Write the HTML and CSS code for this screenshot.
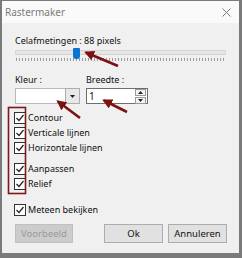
FILE: index.html
```html
<html>
  <head>
    <title>Rastermaker</title>
    <link rel="stylesheet" href="styles.css">
  </head>
  <body>
    <div class="dialog">
      <div class="titlebar">
        <span class="title">Rastermaker</span>
        <svg class="close" width="9" height="9" viewBox="0 0 9 9">
          <path d="M0.5 0.5 L8.5 8.5 M8.5 0.5 L0.5 8.5" stroke="#7a7a7a" stroke-width="1" fill="none"/>
        </svg>
      </div>
      <div class="content">
        <div class="label">Celafmetingen : 88 pixels</div>
        <div class="slider">
          <div class="track"></div>
          <div class="thumb"></div>
          <div class="ticks"></div>
        </div>

        <div class="fields">
          <div class="field">
            <div class="label">Kleur :</div>
            <div class="combo">
              <div class="combo-box"></div>
              <div class="combo-btn">
                <svg width="5" height="3" viewBox="0 0 5 3"><path d="M0 0 L5 0 L2.5 3 Z" fill="#222"/></svg>
              </div>
            </div>
          </div>
          <div class="field">
            <div class="label">Breedte :</div>
            <div class="spin">
              <span class="spin-val">1</span>
              <div class="spin-btns">
                <div class="spin-btn">
                  <svg width="5" height="3" viewBox="0 0 5 3"><path d="M0 3 L5 3 L2.5 0 Z" fill="#222"/></svg>
                </div>
                <div class="spin-btn">
                  <svg width="5" height="3" viewBox="0 0 5 3"><path d="M0 0 L5 0 L2.5 3 Z" fill="#222"/></svg>
                </div>
              </div>
            </div>
          </div>
        </div>

        <div class="checks">
          <div class="check">
            <svg class="cb" width="12" height="12" viewBox="0 0 12 12"><rect x="0.5" y="0.5" width="11" height="11" fill="#fff" stroke="#333"/><path d="M2.5 6 L5 8.5 L9.5 3" fill="none" stroke="#222" stroke-width="1.2"/></svg>
            <span>Contour</span>
          </div>
          <div class="check">
            <svg class="cb" width="12" height="12" viewBox="0 0 12 12"><rect x="0.5" y="0.5" width="11" height="11" fill="#fff" stroke="#333"/><path d="M2.5 6 L5 8.5 L9.5 3" fill="none" stroke="#222" stroke-width="1.2"/></svg>
            <span>Verticale lijnen</span>
          </div>
          <div class="check">
            <svg class="cb" width="12" height="12" viewBox="0 0 12 12"><rect x="0.5" y="0.5" width="11" height="11" fill="#fff" stroke="#333"/><path d="M2.5 6 L5 8.5 L9.5 3" fill="none" stroke="#222" stroke-width="1.2"/></svg>
            <span>Horizontale lijnen</span>
          </div>
          <div class="check spaced">
            <svg class="cb" width="12" height="12" viewBox="0 0 12 12"><rect x="0.5" y="0.5" width="11" height="11" fill="#fff" stroke="#333"/><path d="M2.5 6 L5 8.5 L9.5 3" fill="none" stroke="#222" stroke-width="1.2"/></svg>
            <span>Aanpassen</span>
          </div>
          <div class="check">
            <svg class="cb" width="12" height="12" viewBox="0 0 12 12"><rect x="0.5" y="0.5" width="11" height="11" fill="#fff" stroke="#333"/><path d="M2.5 6 L5 8.5 L9.5 3" fill="none" stroke="#222" stroke-width="1.2"/></svg>
            <span>Relief</span>
          </div>
        </div>

        <div class="check preview">
          <svg class="cb" width="12" height="12" viewBox="0 0 12 12"><rect x="0.5" y="0.5" width="11" height="11" fill="#fff" stroke="#333"/><path d="M2.5 6 L5 8.5 L9.5 3" fill="none" stroke="#222" stroke-width="1.2"/></svg>
          <span>Meteen bekijken</span>
        </div>

        <div class="buttons">
          <div class="btn disabled">Voorbeeld</div>
          <div class="btn ok">Ok</div>
          <div class="btn">Annuleren</div>
        </div>
      </div>

      <!-- annotations drawn over the dialog -->
      <svg class="annot" width="242" height="258" viewBox="0 0 242 258">
        <defs>
          <marker id="head" viewBox="0 0 10 10" refX="8" refY="5" markerWidth="10" markerHeight="10" markerUnits="userSpaceOnUse" orient="auto">
            <path d="M0 0 L10 5 L0 10 Z" fill="#7b1111"/>
          </marker>
        </defs>
        <rect x="8.5" y="107.5" width="17" height="86" fill="none" stroke="#7b1a1a" stroke-width="1.6"/>
        <line x1="118" y1="66" x2="86" y2="52.5" stroke="#7b1111" stroke-width="2.6" marker-end="url(#head)"/>
        <line x1="80" y1="118" x2="58" y2="101.5" stroke="#7b1111" stroke-width="2.6" marker-end="url(#head)"/>
        <line x1="127" y1="112" x2="104" y2="100.5" stroke="#7b1111" stroke-width="2.6" marker-end="url(#head)"/>
      </svg>
    </div>
  </body>
</html>
```

FILE: styles.css
```css
body {
  margin: 0;
  width: 242px;
  height: 258px;
  background: #7a7a7a;
  font-family: "Noto Sans", "Liberation Sans", sans-serif;
  font-size: 9px;
  color: #111;
  overflow: hidden;
}

.dialog {
  position: relative;
  margin: 1px 3px 0 2px;
  height: 252px;
  background: #f0f0f0;
}

.titlebar {
  height: 22px;
  background: #fafafa;
  display: flex;
  align-items: center;
  justify-content: space-between;
  padding: 0 8px 0 3px;
}

.title {
  color: #7c7c7c;
  font-size: 10px;
}

.content {
  display: flex;
  flex-direction: column;
  padding: 12px 12px 0 13px;
}

.label {
  height: 12px;
  line-height: 12px;
}

.slider {
  position: relative;
  box-sizing: border-box;
  width: 211px;
  height: 16px;
  padding-top: 3px;
}

.track {
  height: 3px;
  background: #e6e6e6;
  border: 1px solid #d4d4d4;
  border-radius: 1px;
}

.thumb {
  position: absolute;
  left: 58px;
  top: 1px;
  width: 7px;
  height: 11px;
  background: #0a74d0;
  border-radius: 1px 1px 3px 3px;
}

.ticks {
  margin-top: 3px;
  margin-left: 1px;
  height: 3px;
  background: repeating-linear-gradient(90deg, #9c9c9c 0 1px, transparent 1px 3px);
}

.fields {
  display: flex;
  gap: 6px;
  margin-top: 11px;
}

.field {
  display: flex;
  flex-direction: column;
  gap: 2px;
}

.combo {
  display: flex;
  width: 65px;
  height: 16px;
}

.combo-box {
  flex: 1;
  background: #fff;
  border: 1px solid #b9b9b9;
  border-right: none;
}

.combo-btn {
  width: 13px;
  background: #e8e8e8;
  border: 1px solid #adadad;
  display: flex;
  align-items: center;
  justify-content: center;
}

.spin {
  display: flex;
  align-items: center;
  justify-content: space-between;
  box-sizing: border-box;
  width: 62px;
  height: 16px;
  background: #fff;
  border: 1px solid #6f6f6f;
  padding: 0 1px 0 2px;
}

.spin-val {
  font-size: 10px;
  line-height: 12px;
}

.spin-btns {
  display: flex;
  flex-direction: column;
  gap: 1px;
}

.spin-btn {
  width: 9px;
  height: 5px;
  background: #f4f4f4;
  border: 1px solid #9a9a9a;
  display: flex;
  align-items: center;
  justify-content: center;
}

.checks {
  display: flex;
  flex-direction: column;
  margin-top: 6px;
}

.check {
  display: flex;
  align-items: center;
  gap: 2px;
  height: 15px;
}

.check .cb {
  margin-left: -1px;
}

.check span {
  line-height: 12px;
}

.check.spaced {
  margin-top: 6px;
}

.check.preview {
  margin-top: 11px;
}

.buttons {
  display: flex;
  gap: 5px;
  margin-top: 7px;
}

.btn {
  box-sizing: border-box;
  width: 59px;
  height: 19px;
  line-height: 17px;
  text-align: center;
  background: #e1e1e1;
  border: 1px solid #adadad;
  font-size: 9.5px;
}

.btn.disabled {
  width: 58px;
  background: #cccccc;
  border-color: #bfbfbf;
  color: #9a9a9a;
}

.btn.ok {
  margin-left: auto;
}

.annot {
  position: absolute;
  left: -2px;
  top: -1px;
}
```
